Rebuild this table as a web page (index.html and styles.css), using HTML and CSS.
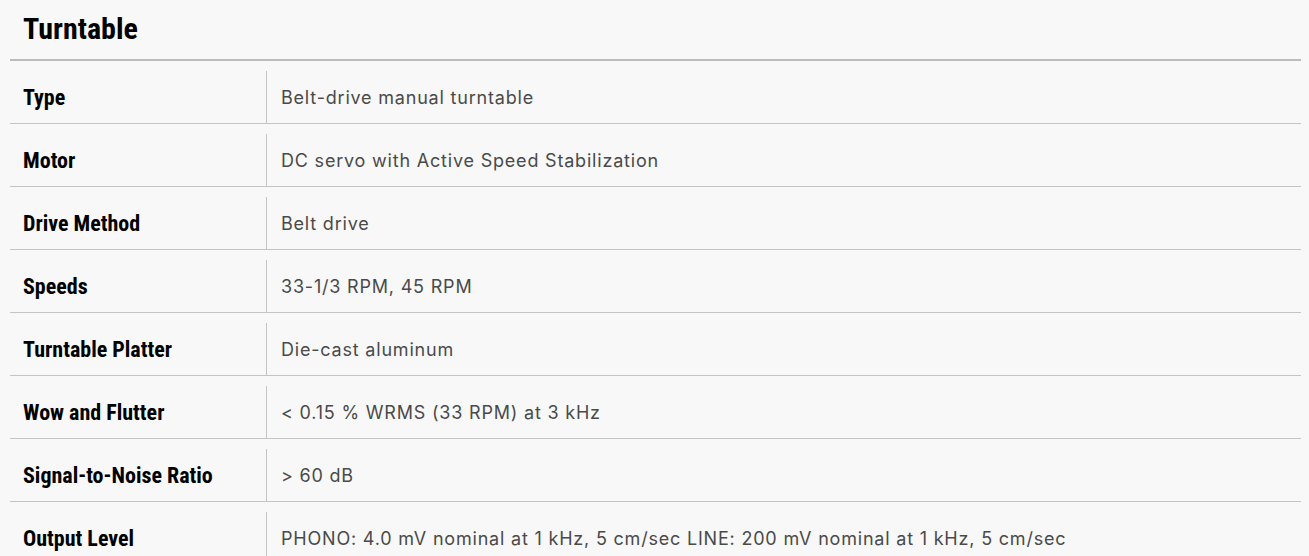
FILE: index.html
```html
<!DOCTYPE html>
<html lang="en">
<head>
<meta charset="utf-8">
<title>Turntable</title>
<link rel="stylesheet" href="styles.css">
</head>
<body>
<section class="specs">
  <h2 class="specs-title">Turntable</h2>
  <dl class="spec-list">
    <div class="spec-row"><dt class="spec-label">Type</dt><dd class="spec-value">Belt-drive manual turntable</dd></div>
    <div class="spec-row"><dt class="spec-label">Motor</dt><dd class="spec-value">DC servo with Active Speed Stabilization</dd></div>
    <div class="spec-row"><dt class="spec-label">Drive Method</dt><dd class="spec-value">Belt drive</dd></div>
    <div class="spec-row"><dt class="spec-label">Speeds</dt><dd class="spec-value">33-1/3 RPM, 45 RPM</dd></div>
    <div class="spec-row"><dt class="spec-label">Turntable Platter</dt><dd class="spec-value">Die-cast aluminum</dd></div>
    <div class="spec-row"><dt class="spec-label">Wow and Flutter</dt><dd class="spec-value">&lt; 0.15 % WRMS (33 RPM) at 3 kHz</dd></div>
    <div class="spec-row"><dt class="spec-label">Signal-to-Noise Ratio</dt><dd class="spec-value">&gt; 60 dB</dd></div>
    <div class="spec-row"><dt class="spec-label">Output Level</dt><dd class="spec-value">PHONO: 4.0 mV nominal at 1 kHz, 5 cm/sec LINE: 200 mV nominal at 1 kHz, 5 cm/sec</dd></div>
  </dl>
</section>
</body>
</html>
```

FILE: styles.css
```css
html, body {
  margin: 0;
  padding: 0;
  background: #f8f8f8;
}

.specs {
  margin: 0 8px 0 10px;
}

.specs-title {
  margin: 0;
  height: 61px;
  box-sizing: border-box;
  padding: 11px 0 0 13px;
  font-family: "Roboto Condensed", "Liberation Sans", sans-serif;
  font-weight: 700;
  font-size: 30px;
  line-height: 36px;
  color: #000;
  border-bottom: 2px solid #bbbbbb;
}

.spec-list {
  margin: 0;
  padding: 0;
}

.spec-row {
  display: flex;
  height: 63px;
  box-sizing: border-box;
  border-bottom: 1px solid #c4c4c4;
  padding-top: 10px;
}

.spec-label {
  width: 257px;
  flex: none;
  box-sizing: border-box;
  padding-left: 13px;
  display: flex;
  align-items: center;
  font-family: "Roboto Condensed", "Liberation Sans", sans-serif;
  font-weight: 700;
  font-size: 22px;
  color: #000;
  border-right: 1px solid #c4c4c4;
}

.spec-value {
  margin: 0;
  padding-left: 14px;
  display: flex;
  align-items: center;
  font-family: Inter, "Liberation Sans", sans-serif;
  font-size: 18px;
  letter-spacing: 0.8px;
  color: #4a4a4a;
}
```
